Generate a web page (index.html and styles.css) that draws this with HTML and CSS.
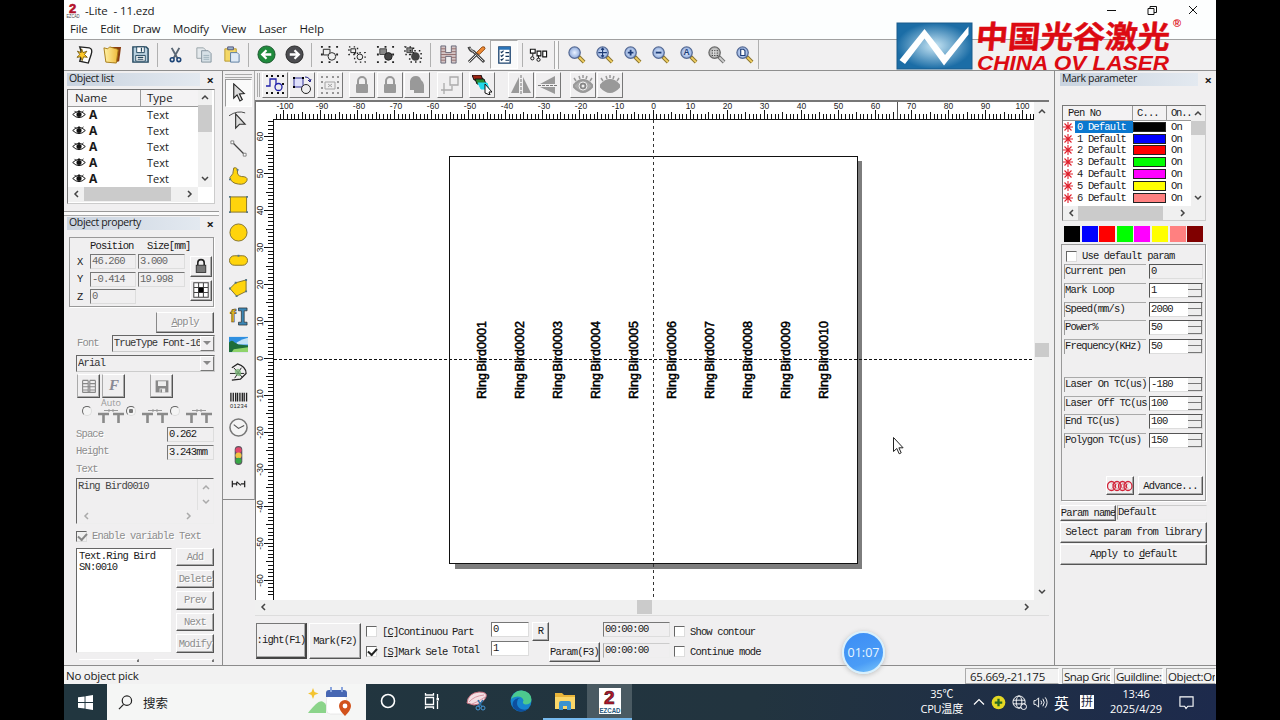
FILE: index.html
```html
<!DOCTYPE html>
<html lang="en">
<head>
    <meta charset="utf-8">
    <title>-Lite - 11.ezd</title>
    <link rel="stylesheet" href="styles.css">
</head>
<body>
<!-- Shared symbols -->
<svg class="defs">
    <defs>
        <radialGradient id="lens"><stop offset="0" stop-color="#e8f1ff"/><stop offset="1" stop-color="#8fabdc"/></radialGradient>
        <radialGradient id="logoBg"><stop offset="0" stop-color="#c8e6f5"/><stop offset="1" stop-color="#1b6da6"/></radialGradient>
        <linearGradient id="paper"><stop offset="0" stop-color="#fff3a8"/><stop offset="1" stop-color="#f0b93a"/></linearGradient>
    </defs>
    <symbol id="mag" viewBox="0 0 20 20">
        <path d="M12 12l6 6" stroke="#8a7430" stroke-width="4"/>
        <path d="M13 13l5 5" stroke="#f1cf62" stroke-width="2"/>
        <circle cx="8" cy="8" r="6" fill="url(#lens)" stroke="#566a94" stroke-width="1.3"/>
    </symbol>
    <symbol id="dots" viewBox="0 0 20 20">
        <g fill="#111"><path d="M1 1h2v2H1zM6 1h2v2H6zM12 1h2v2h-2zM17 1h2v2h-2zM1 6h2v2H1zM17 6h2v2h-2zM1 12h2v2H1zM17 12h2v2h-2zM1 17h2v2H1zM6 17h2v2H6zM12 17h2v2h-2zM17 17h2v2h-2z"/></g>
    </symbol>
    <symbol id="eye" viewBox="0 0 14 10">
        <path d="M0 5q7-7 14 0q-7 7-14 0z" fill="#fff" stroke="#111" stroke-width="1.1"/><circle cx="7" cy="5" r="2.800" fill="#111"/><path d="M2 1l2 2M7 0v2M12 1l-2 2" stroke="#111"/>
    </symbol>
    <symbol id="star" viewBox="0 0 10 10">
        <path d="M0 5h10M5 0v10M1.5 1.5l7 7M8.5 1.5l-7 7" stroke="#e0202c" stroke-width="1.1"/>
    </symbol>
    <symbol id="lock" viewBox="0 0 20 20">
        <path d="M6 9V6a4 4 0 0 1 8 0v3" fill="none" stroke="#999" stroke-width="2"/><rect x="4" y="9" width="12" height="9" rx="1" fill="#999"/>
    </symbol>
    <symbol id="up" viewBox="0 0 8 8"><path d="M1 6l3-3 3 3" fill="none" stroke="currentColor" stroke-width="1.5"/></symbol>
    <symbol id="down" viewBox="0 0 8 8"><path d="M1 2l3 3 3-3" fill="none" stroke="currentColor" stroke-width="1.5"/></symbol>
    <symbol id="left" viewBox="0 0 8 8"><path d="M6 1L3 4l3 3" fill="none" stroke="currentColor" stroke-width="1.5"/></symbol>
    <symbol id="right" viewBox="0 0 8 8"><path d="M2 1l3 3-3 3" fill="none" stroke="currentColor" stroke-width="1.5"/></symbol>
    <symbol id="tt" viewBox="0 0 26 14"><path d="M0 5h11M15 5h11M5.500 5v9M20.500 5v9" stroke="#8a8a8a" stroke-width="2.600"/><path d="M6 1.500h14M11 0v3M15 0v3" stroke="#999"/></symbol>
</svg>

<div class="window">
    <header class="titlebar">
        <svg class="app-icon" viewBox="0 0 14 16"><text x="3" y="11" font-size="13" font-weight="bold" fill="#b3122b" stroke="#b3122b" stroke-width=".6">2</text><text x="0.500" y="15.500" font-size="4.500" textLength="13" lengthAdjust="spacingAndGlyphs" fill="#444">EZCAD</text></svg>
        <span class="title">-Lite &nbsp;- 11.ezd</span>
        <div class="win-buttons">
            <svg viewBox="0 0 10 10"><path d="M1 5.500h9" stroke="#111"/></svg>
            <svg viewBox="0 0 10 10"><path d="M1 3.500h6v6H1zM3 3V1.500h6.500v6H7" fill="none" stroke="#111"/></svg>
            <svg viewBox="0 0 10 10"><path d="M1 1l8 8M9 1l-8 8" stroke="#111"/></svg>
        </div>
    </header>
    <nav class="menu">
        <span>File</span><span>Edit</span><span>Draw</span><span>Modify</span><span>View</span><span>Laser</span><span>Help</span>
    </nav>

    <div class="toolbar">
        <span class="tb"><svg viewBox="0 0 20 20"><path d="M5 2l10 1q4 1 2 7l-3 9-9-2q3-8 0-15z" fill="#fff" stroke="#222" stroke-width="1.400"/><path d="M7 4l1.500 4 4-1.500-2.500 3.500 3 3-4-.5-1.500 4-1.500-4-4 .5 3-3-2.500-3.500 4 1.500z" fill="#ffc928" stroke="#604800" stroke-width=".8"/></svg></span>
        <span class="tb"><svg viewBox="0 0 20 20"><path d="M9 2h10l-2 15-6 2z" fill="#8a3d10"/><path d="M1 3l4 1 2-2 7 2 2 1-2 14-11-1z" fill="url(#paper)" stroke="#a67b18"/></svg></span>
        <span class="tb"><svg viewBox="0 0 20 20"><path d="M2 2h14l2 2v14H2z" fill="#b9d1e0" stroke="#24485f" stroke-width="1.500"/><path d="M6 2h8v6H6zM5 11h10v6H5z" fill="#fff" stroke="#24485f"/><path d="M11 3v4M7 13h6M7 15h6" stroke="#24485f" stroke-width="1.300"/></svg></span>
        <i class="sep"></i>
        <span class="tb"><svg viewBox="0 0 20 20"><path d="M6 3l6 11M14 3L8 14" stroke="#5a6775" stroke-width="2"/><circle cx="6.500" cy="15.500" r="2" fill="none" stroke="#1b4376" stroke-width="1.600"/><circle cx="13.500" cy="15.500" r="2" fill="none" stroke="#1b4376" stroke-width="1.600"/></svg></span>
        <span class="tb"><svg viewBox="0 0 20 20"><path d="M3 3h7l2 2v9H3z" fill="#e4e9ec" stroke="#98a2a8"/><path d="M8 6h7l3 3v9H8z" fill="#d6e0e6" stroke="#8595a0"/><path d="M10 11h6M10 13h6M10 15h6" stroke="#9fb2bd"/></svg></span>
        <span class="tb"><svg viewBox="0 0 20 20"><path d="M3 4h12v13H3z" fill="#f4d867" stroke="#b79a33"/><path d="M6 2h6v3H6z" fill="#9bb6d0" stroke="#557"/><path d="M9 8h7l2 2v8H9z" fill="#dfeaf6" stroke="#5a7ba0"/></svg></span>
        <i class="sep"></i>
        <span class="tb"><svg viewBox="0 0 20 20"><circle cx="10" cy="10" r="9" fill="#1f8a3c" stroke="#17542a"/><path d="M15 10H6M10 5.500L5.500 10l4.500 4.500" fill="none" stroke="#fff" stroke-width="2.400"/></svg></span>
        <span class="tb"><svg viewBox="0 0 20 20"><circle cx="10" cy="10" r="9" fill="#4c4c50" stroke="#222"/><path d="M5 10h9M10 5.500l4.500 4.500-4.500 4.500" fill="none" stroke="#fff" stroke-width="2.400"/></svg></span>
        <i class="sep"></i>
        <span class="tb"><svg viewBox="0 0 20 20"><path d="M1 1h2v2H1zM9 1h2v2H9zM17 1h2v2h-2zM1 9h2v2H1zM17 9h2v2h-2zM1 17h2v2H1zM9 17h2v2H9zM17 17h2v2h-2z" fill="#222"/><path d="M3.500 4.500h7v6h-7z" fill="#eee" stroke="#222"/><circle cx="12.500" cy="12" r="4" fill="#eee" stroke="#222"/></svg></span>
        <span class="tb"><svg viewBox="0 0 20 20"><path d="M3 4h5v4H3z" fill="#eee" stroke="#222"/><circle cx="12.500" cy="12.500" r="3" fill="#eee" stroke="#222"/><path d="M1 2h9v8H1zM7 8h11v10H7z" fill="none" stroke="#222" stroke-width="1.500" stroke-dasharray="1.500 3.500"/></svg></span>
        <span class="tb"><svg viewBox="0 0 20 20"><path d="M1 1h2v2H1zM9 1h2v2H9zM17 1h2v2h-2zM1 9h2v2H1zM17 9h2v2h-2zM1 17h2v2H1zM9 17h2v2H9zM17 17h2v2h-2z" fill="#222"/><path d="M4 4h7v6H4z" fill="#888" stroke="#444"/><circle cx="13" cy="12" r="4" fill="#444" stroke="#222"/></svg></span>
        <span class="tb"><svg viewBox="0 0 20 20"><path d="M3 3h6v5H3z" fill="#888" stroke="#444"/><circle cx="12" cy="12" r="4.500" fill="#444"/><path d="M1 2h9v8H1zM6 6h12v12H6z" fill="none" stroke="#222" stroke-width="1.600" stroke-dasharray="1.600 3.200"/></svg></span>
        <i class="sep"></i>
        <span class="tb"><svg viewBox="0 0 20 20"><path d="M2 1h5v7h6V1h5v18h-5v-7H7v7H2z" fill="#d5c5c5" stroke="#667"/><path d="M2 4h5M2 7h5M2 10h16M2 13h5M2 16h5M13 4h5M13 7h5M13 13h5M13 16h5" stroke="#946f6f"/></svg></span>
        <span class="tb"><svg viewBox="0 0 20 20"><path d="M2 2q1 4 5 5l11 11" stroke="#444" stroke-width="3" fill="none"/><path d="M3 3q1 3 4 4l10 10" stroke="#ddd" fill="none"/><path d="M2 18l9-9" stroke="#444" stroke-width="3"/><path d="M2 18l8-8" stroke="#eee"/><path d="M10 8l6-6q3-1 3 2l-6 6z" fill="#ee8a34" stroke="#8f4a12"/></svg></span>
        <span class="tb pressed"><svg viewBox="0 0 20 20"><path d="M4 2h12v17H4z" fill="#fff" stroke="#1c4470" stroke-width="1.400"/><path d="M4 2h12v3H4z" fill="#2a73b8"/><path d="M6 7l1 1 2-2M6 11l1 1 2-2M6 15l1 1 2-2M11 8h4M11 12h4M11 16h4" fill="none" stroke="#15365c" stroke-width="1.200"/></svg></span>
        <i class="sep short"></i>
        <span class="tb"><svg viewBox="0 0 20 20"><path d="M1.500 4.500h5v4h-5zM8.500 6.500h4v5h-4zM14.500 6.500h4v6h-4z" fill="#fff" stroke="#111" stroke-width="1.200"/><circle cx="3.500" cy="14" r="1.700" fill="none" stroke="#111"/><circle cx="10" cy="15.500" r="1.700" fill="none" stroke="#111"/><path d="M4 9v3M10 11v3" stroke="#111"/></svg></span>
        <i class="sep wide"></i>
        <span class="tb"><svg viewBox="0 0 20 20"><use href="#mag"/></svg></span>
        <span class="tb"><svg viewBox="0 0 20 20"><use href="#mag"/><path d="M8 3.500v9M3.500 8h9M6.500 5L8 3.500 9.500 5M6.500 11L8 12.500 9.500 11" stroke="#1d3c78" stroke-width="1.200" fill="none"/></svg></span>
        <span class="tb"><svg viewBox="0 0 20 20"><use href="#mag"/><path d="M8 5v6M5 8h6" stroke="#1d3c78" stroke-width="2"/></svg></span>
        <span class="tb"><svg viewBox="0 0 20 20"><use href="#mag"/><path d="M5 8h6" stroke="#1d3c78" stroke-width="2"/></svg></span>
        <span class="tb"><svg viewBox="0 0 20 20"><use href="#mag"/><text x="4.800" y="11" font-size="9" font-weight="bold" fill="#1d3c78">A</text></svg></span>
        <span class="tb"><svg class="gray" viewBox="0 0 20 20"><use href="#mag"/><path d="M5 6h7M5 8.500h7M5 11h7" stroke="#222" stroke-dasharray="1.200 1.400"/></svg></span>
        <span class="tb"><svg viewBox="0 0 20 20"><use href="#mag"/><path d="M6 4.500h3l1.500 1.500v5H6z" fill="#fff" stroke="#1d3c78" stroke-width="1.200"/></svg></span>
        <i class="sep end"></i>
    </div>

    <main class="main">
        <!-- Left dock -->
        <aside class="left">
            <div class="dock-title"><span>Object list</span><b>×</b></div>
            <div class="obj-list">
                <div class="obj-cols">
                    <div class="obj-head"><span>Name</span><span>Type</span></div>
                    <div class="obj-row"><svg><use href="#eye"/></svg><b>A</b><span>Text</span></div>
                    <div class="obj-row"><svg><use href="#eye"/></svg><b>A</b><span>Text</span></div>
                    <div class="obj-row"><svg><use href="#eye"/></svg><b>A</b><span>Text</span></div>
                    <div class="obj-row"><svg><use href="#eye"/></svg><b>A</b><span>Text</span></div>
                    <div class="obj-row"><svg><use href="#eye"/></svg><b>A</b><span>Text</span></div>
                </div>
                <div class="vscroll"><svg><use href="#up"/></svg><i></i><svg><use href="#down"/></svg></div>
                <div class="hscroll"><svg><use href="#left"/></svg><i></i><svg><use href="#right"/></svg></div>
            </div>
            <div class="splitter"></div>
            <div class="dock-title"><span>Object property</span><b>×</b></div>
            <div class="property">
                <div class="pos-box">
                    <div class="pos-grid">
                        <span></span><span class="pos-h">Position</span><span class="pos-h size">Size[mm]</span>
                        <span>X</span><span class="field dim">46.260</span><span class="field dim">3.000</span>
                        <span>Y</span><span class="field dim">-0.414</span><span class="field dim">19.998</span>
                        <span>Z</span><span class="field dim">0</span>
                    </div>
                    <div class="pos-buttons">
                        <span class="btn"><svg viewBox="0 0 20 20"><path d="M6 9V6a4 4 0 0 1 8 0v3" fill="none" stroke="#222" stroke-width="2"/><rect x="4" y="9" width="12" height="9" fill="#777" stroke="#222"/></svg></span>
                        <span class="btn"><svg viewBox="0 0 20 20"><path d="M1 1h18v18H1zM7 1v18M13 1v18M1 7h18M1 13h18" fill="#fff" stroke="#444" stroke-width="1.300"/><path d="M7 7h6v6H7z"/></svg></span>
                    </div>
                </div>
                <span class="btn apply dis"><u>A</u>pply</span>
                <div class="font-row"><span class="dis">Font</span><span class="select"><em>TrueType Font-16</em><i></i></span></div>
                <span class="select arial"><em>Arial</em><i></i></span>
                <div class="font-buttons">
                    <span class="btn"><svg viewBox="0 0 20 20"><path d="M2 3h7M11 3h7M2 7h7M11 7h7M2 11h16M2 15h7M11 15h7M2 18h16M2 3v15M9 3v15M11 3v15M18 3v15" stroke="#888" stroke-width="1.400"/></svg></span>
                    <span class="btn f">F</span>
                    <span class="btn save"><svg viewBox="0 0 20 20"><path d="M2 3h16v15H2z" fill="#888"/><path d="M5 4h10v6H5zM7 13h7v5H7z" fill="#eee"/><path d="M8 14h2v4H8z" fill="#888"/></svg></span>
                </div>
                <div class="radios">
                    <i class="radio"></i><span><small>Auto</small><svg><use href="#tt"/></svg></span>
                    <i class="radio on"></i><span><svg><use href="#tt"/></svg></span>
                    <i class="radio"></i><span><svg><use href="#tt"/></svg></span>
                </div>
                <div class="metric"><span class="dis">Space</span><span class="field">0.262</span></div>
                <div class="metric h"><span class="dis">Height</span><span class="field">3.243mm</span></div>
                <div class="dis text-label">Text</div>
                <div class="textarea"><span>Ring Bird0010</span>
                    <div class="ta-v"><svg><use href="#up"/></svg><svg><use href="#down"/></svg></div>
                    <div class="ta-h"><svg><use href="#left"/></svg><svg><use href="#right"/></svg></div>
                </div>
                <div class="enable dis"><i class="check on"></i>Enable variable Text</div>
                <div class="var">
                    <div class="var-list">Text.Ring Bird<br>SN:0010</div>
                    <div class="var-buttons">
                        <span class="btn dis">Add</span><span class="btn dis">Delete</span><span class="btn dis">Prev</span><span class="btn dis">Next</span><span class="btn dis">Modify</span>
                    </div>
                </div>
                <div class="cut-row"><i></i><i></i></div>
            </div>
        </aside>

        <!-- Draw tools -->
        <div class="tools">
            <i class="grip"></i>
            <span class="tool pressed"><svg viewBox="0 0 20 20"><path d="M5 1l11 10-5 .5 3 6-2.500 1.500-3-6.500L5 16z" fill="#ddd" stroke="#222" stroke-width="1.200"/></svg></span>
            <span class="tool"><svg viewBox="0 0 20 20"><path d="M0 5q9-6 17-3" fill="none" stroke="#444"/><path d="M7 3l10 11H11l-4 4z" fill="#ddd" stroke="#333" stroke-width="1.200"/></svg></span>
            <span class="tool"><svg viewBox="0 0 20 20"><path d="M4 4l12 12" stroke="#444" stroke-width="1.300"/><path d="M2 2h3v3H2zM15 15h3v3h-3z" fill="#fff" stroke="#666" stroke-width=".8"/></svg></span>
            <span class="tool"><svg viewBox="0 0 20 20"><path d="M5 1q4-1 4 3-1 5 4 6 7 0 6 4-2 5-9 4Q2 17 1 11q4-3 4-10z" fill="#ffd40c" stroke="#83712a"/><path d="M8 2h2v2H8zM0 12h2v2H0z" fill="#578"/></svg></span>
            <span class="tool"><svg viewBox="0 0 20 20"><path d="M1.500 2h17v16h-17z" fill="#ffd40c" stroke="#83712a"/><path d="M0 1h2v2H0zM18 1h2v2h-2zM0 17h2v2H0zM18 17h2v2h-2z" fill="#578"/></svg></span>
            <span class="tool"><svg viewBox="0 0 20 20"><circle cx="10" cy="10" r="9" fill="#ffd40c" stroke="#83712a"/></svg></span>
            <span class="tool"><svg viewBox="0 0 20 20"><rect x="0.500" y="5" width="19" height="10" rx="5" fill="#ffd40c" stroke="#83712a"/><path d="M9 4h2v2H9z" fill="#578"/></svg></span>
            <span class="tool"><svg viewBox="0 0 20 20"><path d="M1 10l6-6 11-3v12l-10 5z" fill="#ffd40c" stroke="#83712a"/><path d="M0 9h2v2H0zM6 3h2v2H6zM17 0h2v2h-2zM17 12h2v2h-2zM7 17h2v2H7z" fill="#578"/></svg></span>
            <span class="tool"><svg viewBox="0 0 20 20"><text x="1" y="16" font-size="19" font-weight="bold" fill="#e3b51d" stroke="#333" stroke-width=".6">f</text><path d="M10 1h9v3h-3v12h3v3h-9v-3h3V4h-3z" fill="#3b86b5" stroke="#222" stroke-width=".7"/></svg></span>
            <span class="tool"><svg viewBox="0 0 20 20"><path d="M0 2h20v16H0z" fill="#2f8fe0"/><path d="M8 8q6-4 12-5v7H8z" fill="#c4e2f6"/><path d="M0 8q3-4 6 0l4 2 10 1v7H0z" fill="#1d6d39"/><path d="M5 15l15-2v5H3z" fill="#8fd36a"/></svg></span>
            <span class="tool"><svg viewBox="0 0 20 20"><path d="M3 5l6-4q9 3 9 10l-6 6-9 1" fill="none" stroke="#222" stroke-width="1.300"/><path d="M1 11h15M5 5l9 10M13 5L6 16" stroke="#222"/><path d="M6 8q4-4 6 0t-1 6q-5 0-5-6z" fill="#79b578" opacity=".8"/></svg></span>
            <span class="tool"><svg viewBox="0 0 20 20"><path d="M2 3v9M4.500 3v9M7 3v9M9 3v9M11.500 3v9M14 3v9M16 3v9M18.500 3v9" stroke="#222" stroke-width="1.400"/><text x="1" y="18.500" font-size="6" textLength="18" fill="#222">01234</text></svg></span>
            <span class="tool"><svg viewBox="0 0 20 20"><circle cx="10" cy="10" r="9" fill="#f4f4f4" stroke="#777" stroke-width="1.600"/><path d="M5 7l5 4 6-3" fill="none" stroke="#555" stroke-width="1.200"/></svg></span>
            <span class="tool"><svg viewBox="0 0 20 20"><rect x="6" y="0" width="8" height="20" rx="4" fill="#5d5560"/><circle cx="10" cy="4.500" r="3.200" fill="#e2486c"/><circle cx="10" cy="10" r="3.200" fill="#efc443"/><circle cx="10" cy="15.500" r="3.200" fill="#38a746"/></svg></span>
            <span class="tool"><svg viewBox="0 0 20 20"><path d="M3.500 7v7M3.500 10.500h4M16.500 7v7M12.500 10.500h4M8 8l4.500 4M8 9v3" stroke="#222" stroke-width="1.300"/></svg></span>
        </div>

        <!-- Work area -->
        <section class="center">
            <div class="toolbar2">
                <i class="grip-v"></i>
                <span class="btn2"><svg viewBox="0 0 20 20"><path d="M1 0h2v2H1zM6 0h2v2H6zM12 0h2v2h-2zM17 0h2v2h-2zM1 17h2v2H1zM6 17h2v2H6zM12 17h2v2h-2zM17 17h2v2h-2zM17 8h2v2h-2z" fill="#111"/><path d="M1 11h4V4h6v6" fill="none" stroke="#22a" stroke-width="1.300"/><circle cx="13.500" cy="12" r="3.500" fill="#eee" stroke="#22a" stroke-width="1.300"/></svg></span>
                <span class="btn2"><svg viewBox="0 0 20 20"><path d="M2 3h9v9H2z" fill="#dfe0fa" stroke="#339"/><circle cx="14" cy="14" r="4.500" fill="#eee" stroke="#222"/><path d="M1 2h2v2H1zM10 2h2v2h-2zM1 11h2v2H1z"/><path d="M13 2q5 0 5 5M16 5l2 2 1-3" fill="none" stroke="#228"/></svg></span>
                <span class="btn2 fade"><svg viewBox="0 0 20 20"><use href="#dots"/><path d="M5 7h10v7H5z" fill="none" stroke="#333"/><path d="M8 9l4 3M12 9l-4 3" stroke="#333"/></svg></span>
                <span class="btn2 g6"><svg><use href="#lock"/></svg></span>
                <span class="btn2"><svg><use href="#lock"/></svg></span>
                <span class="btn2"><svg viewBox="0 0 20 20"><path d="M3 10V6q1-5 6-5 4 0 5 4 3 2 3 5v8H7v-3H3z" fill="#999"/></svg></span>
                <span class="btn2 g6"><svg viewBox="0 0 20 20"><path d="M10 2h8v8h-8zM4 8v11M1 15h11v-4" fill="none" stroke="#aaa" stroke-width="1.300"/></svg></span>
                <span class="btn2 g6"><svg viewBox="0 0 20 20"><path d="M0 0h9l2 5H2z" fill="#9b2412" stroke="#111"/><path d="M3 4h9l2 5H5z" fill="#278a32" stroke="#111"/><path d="M6 8h9l2 6H9z" fill="#20d8ea" stroke="#20d8ea"/><path d="M13 9l7 8-3 0 1 3-5-2z" fill="#fff" stroke="#111"/></svg></span>
                <span class="btn2 g12"><svg viewBox="0 0 20 20"><path d="M8 2v16H0zM12 2v16h8z" fill="#999"/><path d="M10 0v20" stroke="#777" stroke-dasharray="3 1"/></svg></span>
                <span class="btn2"><svg viewBox="0 0 20 20"><path d="M17 1v8H2zM17 19v-7H2z" fill="#999"/><path d="M0 10.500h20" stroke="#777" stroke-dasharray="3 1"/></svg></span>
                <span class="btn2 g8"><svg viewBox="0 0 20 20"><path d="M0 11q10-12 20 0-10 12-20 0z" fill="#aaa" stroke="#999" stroke-width="2"/><path d="M1 3l2 3M6 1l1 3M10 0v3M14 1l-1 3M19 3l-2 3" stroke="#999" stroke-width="1.500"/><circle cx="10" cy="11" r="4" fill="#888" stroke="#eee"/><circle cx="10" cy="11" r="1.500" fill="#eee"/></svg></span>
                <span class="btn2"><svg viewBox="0 0 20 20"><path d="M0 11q10-12 20 0-10 12-20 0z" fill="#999" stroke="#999" stroke-width="2"/><path d="M1 3l2 3M6 1l1 3M10 0v3M14 1l-1 3M19 3l-2 3" stroke="#999" stroke-width="1.500"/></svg></span>
            </div>
            <div class="canvas-row">
                <svg id="canvas" class="canvas" viewBox="256 102 778 498">
                    <rect x="256" y="102" width="778" height="498" fill="#fff"/>
                    <g id="rulers"></g>
                    <rect x="455" y="563" width="407" height="6" fill="#7d7d7d"/>
                    <rect x="857" y="161" width="5" height="408" fill="#7d7d7d"/>
                    <rect x="449.500" y="156.500" width="408" height="407" fill="#fff" stroke="#111"/>
                    <path d="M274 359.500H1034" stroke="#111" stroke-dasharray="3 2"/>
                    <path d="M653.500 120V600" stroke="#333" stroke-dasharray="3 3"/>
                    <path d="M897.500 102v17" stroke="#555"/>
                    <g id="rings" class="rings"></g>
                    <path d="M893.500 437.500v14l3.300-3 2.400 5.300 2-1-2.300-5h4.200z" fill="#fff" stroke="#222"/>
                </svg>
                <div class="vscroll big"><svg><use href="#up"/></svg><i></i><svg><use href="#down"/></svg></div>
            </div>
            <div class="hscroll big"><svg><use href="#left"/></svg><i></i><svg><use href="#right"/></svg></div>
            <div class="mark-bar">
                <span class="btn light">:ight(F1)</span>
                <span class="btn mark">Mark(F2)</span>
                <div class="col c-mode"><label><i class="check"></i>[<u>C</u>]Continuou</label><label><i class="check on"></i>[<u>S</u>]Mark Sele</label></div>
                <div class="col c-part"><span>Part</span><span>Total</span></div>
                <div class="col c-num"><span class="field white">0</span><span class="field white">1</span></div>
                <span class="btn r">R</span>
                <span class="btn param">Param(F3)</span>
                <div class="col c-time"><span class="field">00:00:00</span><span class="field flat">00:00:00</span></div>
                <div class="col c-opt"><label><i class="check"></i>Show contour</label><label><i class="check"></i>Continue mode</label></div>
            </div>
        </section>

        <!-- Mark parameter dock -->
        <aside class="right">
            <div class="dock-title"><span>Mark parameter</span><b>×</b></div>
            <div class="pens">
                <div class="pen-cols">
                    <div class="pen-head"><span>Pen No</span><span>C...</span><span>On..</span></div>
                    <div class="pen sel"><svg><use href="#star"/></svg><span>0 Default</span><i class="k0"></i><em>On</em></div>
                    <div class="pen"><svg><use href="#star"/></svg><span>1 Default</span><i class="k1"></i><em>On</em></div>
                    <div class="pen"><svg><use href="#star"/></svg><span>2 Default</span><i class="k2"></i><em>On</em></div>
                    <div class="pen"><svg><use href="#star"/></svg><span>3 Default</span><i class="k3"></i><em>On</em></div>
                    <div class="pen"><svg><use href="#star"/></svg><span>4 Default</span><i class="k4"></i><em>On</em></div>
                    <div class="pen"><svg><use href="#star"/></svg><span>5 Default</span><i class="k5"></i><em>On</em></div>
                    <div class="pen"><svg><use href="#star"/></svg><span>6 Default</span><i class="k6"></i><em>On</em></div>
                </div>
                <div class="vscroll"><svg><use href="#up"/></svg><i></i><svg><use href="#down"/></svg></div>
                <div class="hscroll"><svg><use href="#left"/></svg><i></i><svg><use href="#right"/></svg></div>
            </div>
            <div class="swatches"><i class="k0"></i><i class="k1"></i><i class="k2"></i><i class="k3"></i><i class="k4"></i><i class="k5"></i><i class="k6"></i><i class="k7"></i></div>
            <div class="param-box">
                <label class="use-def"><i class="check"></i>Use default param</label>
                <div class="prow"><span>Current pen</span><b class="ro">0</b></div>
                <div class="prow"><span>Mark Loop</span><b>1<i></i></b></div>
                <div class="prow"><span>Speed(mm/s)</span><b>2000<i></i></b></div>
                <div class="prow"><span>Power%</span><b>50<i></i></b></div>
                <div class="prow"><span>Frequency(KHz)</span><b>50<i></i></b></div>
                <div class="prow tc"><span>Laser On TC(us)</span><b>-180<i></i></b></div>
                <div class="prow"><span>Laser Off TC(us</span><b>100<i></i></b></div>
                <div class="prow"><span>End TC(us)</span><b>100<i></i></b></div>
                <div class="prow"><span>Polygon TC(us)</span><b>150<i></i></b></div>
                <div class="adv">
                    <span class="btn wave"><svg viewBox="0 0 26 12"><g fill="none" stroke="#d22338" stroke-width="1.300"><ellipse cx="4.500" cy="6" rx="4" ry="4.500"/><ellipse cx="10" cy="6" rx="4" ry="4.500"/><ellipse cx="15.500" cy="6" rx="4" ry="4.500"/><ellipse cx="21" cy="6" rx="4" ry="4.500"/><path d="M5 3.500l5 5M10 3.500l-5 5M11 3.500l5 5M16 3.500l-5 5M16 3.500l5 5M21 3.500l-5 5" stroke-width=".7"/></g></svg></span>
                    <span class="btn">Advance...</span>
                </div>
            </div>
            <div class="pname"><span class="btn">Param name</span><span class="field flat">Default</span></div>
            <span class="btn wide-btn">Select param from library</span>
            <span class="btn wide-btn">Apply to&nbsp;<u>d</u>efault</span>
        </aside>
    </main>

    <footer class="status">
        <span class="msg">No object pick</span>
        <span class="cell c1">65.669,-21.175</span><span class="cell c2">Snap Grid</span><span class="cell c2">Guildline:</span><span class="cell c3">Object:On</span>
    </footer>

    <div class="taskbar">
        <div class="start"><svg viewBox="0 0 16 16"><path d="M0 2.500l7-1v6H0zM8 1.300L16 0v7.500H8zM0 8.500h7v6l-7-1zM8 8.500h8V16l-8-1.300z" fill="#fff"/></svg></div>
        <div class="search">
            <svg class="s-ic" viewBox="0 0 16 16"><circle cx="9.500" cy="6" r="5" fill="none" stroke="#222" stroke-width="1.300"/><path d="M6 10l-5 5" stroke="#222" stroke-width="1.300"/></svg>
            <span>搜索</span>
            <svg class="s-art" viewBox="0 0 44 30"><path d="M0 26q2-3 8-9 6-6 10 1v8z" fill="#8bd48a"/><path d="M5 1l1.500 4 4 1.500-4 1.500L5 12 3.500 8 0 6.500 3.500 5z" fill="#f4c430"/><rect x="18.500" y="8" width="20" height="19" rx="4" fill="#fff" stroke="#ddd" stroke-width=".6"/><path d="M18 10V6q0-3 3-3h15q3 0 3 3v4z" fill="#4767b3"/><path d="M23 0v5M34 0v5" stroke="#89a4dd" stroke-width="2"/><path d="M37 13a6 6 0 0 1 6 6q0 4-6 10-6-6-6-10a6 6 0 0 1 6-6z" fill="#d2521b"/><circle cx="37" cy="19" r="2.400" fill="#fff"/></svg>
        </div>
        <div class="apps">
            <span><svg viewBox="0 0 22 22"><circle cx="11" cy="11" r="6.500" fill="none" stroke="#fff" stroke-width="1.600"/></svg></span>
            <span><svg viewBox="0 0 22 22"><path d="M4.500 7.500h8v7h-8zM4.500 3v2h8V3M4.500 19v-2h8v2M16.500 4v4M16.500 11v8" fill="none" stroke="#fff" stroke-width="1.300"/><path d="M15.500 8h2.500v2.500h-2.500z" fill="#fff"/></svg></span>
            <span><svg viewBox="0 0 22 22"><path d="M1 13Q2 3 13 2q9 0 7 5-3 7-12 8z" fill="#f3dfe4" stroke="#c56f7e"/><path d="M3 12q5-6 15-7M6 14q6-2 13-7" stroke="#d897a3" fill="none"/><path d="M12 10l4 7M17 10l-5 7" stroke="#2c72a8" stroke-width="1.500"/><circle cx="12" cy="18" r="2" fill="none" stroke="#4797d6"/><circle cx="17" cy="18" r="2" fill="none" stroke="#4797d6"/></svg></span>
            <span><svg viewBox="0 0 22 22"><circle cx="11" cy="11" r="10.500" fill="#1684cf"/><path d="M1 9Q4 0 12 .5q9 1 9.500 9-.5 5-6 5-4-1-2-4-1-4-6-4-4 0-6.500 2.500z" fill="#4cc98e"/><path d="M8 9q-3 7 3 10 5 2 8-1-5 5-11 3Q1 18 3 12q2-4 7-4z" fill="#0d4f9e"/></svg></span>
            <span class="open"><svg viewBox="0 0 22 22"><path d="M1 3h7l2 2h11v14H1z" fill="#e9b53a"/><path d="M1 7h20v12H1z" fill="#fbd768"/><path d="M5 20v-7q0-2 2-2h8q2 0 2 2v7h-4v-4H9v4z" fill="#3b93cf"/></svg></span>
            <span class="open active"><svg viewBox="0 0 22 26"><path d="M0 0h22v26H0z" fill="#fff"/><text x="5" y="16" font-size="19" font-weight="bold" fill="#b5182c" stroke="#4b1420" stroke-width=".7">2</text><text x="0.500" y="24.500" font-size="8" font-weight="bold" textLength="21" lengthAdjust="spacingAndGlyphs" fill="#24587e">EZCAD</text></svg></span>
        </div>
        <div class="tray">
            <div class="two temp"><span>35℃</span><span>CPU温度</span></div>
            <svg class="t-up" viewBox="0 0 12 12"><path d="M1 8.500l5-5 5 5" fill="none" stroke="#fff" stroke-width="1.200"/></svg>
            <svg viewBox="0 0 16 16"><circle cx="8" cy="8" r="7.300" fill="#e5d824"/><path d="M8 4v8M4 8h8" stroke="#26691f" stroke-width="2.400"/></svg>
            <svg viewBox="0 0 16 16"><g fill="none" stroke="#fff"><circle cx="7.500" cy="7.500" r="6.500"/><ellipse cx="7.500" cy="7.500" rx="3" ry="6.500"/><path d="M1 5.500h13M1 9.500h13"/></g><circle cx="12.500" cy="12.500" r="3" fill="#22304a" stroke="#fff"/></svg>
            <svg viewBox="0 0 16 16"><g fill="none" stroke="#fff"><path d="M1 6h2l3-3v10l-3-3H1zM8.500 6q1.500 2 0 4M10.500 4q3 4 0 8M13 2.500q4 5.500 0 11"/></g></svg>
            <span class="ying">英</span>
            <span class="pin">拼</span>
            <div class="two clock"><span>13:46</span><span>2025/4/29</span></div>
            <svg class="note" viewBox="0 0 16 16"><path d="M1 2h14v10H9.500L7.500 14.500 6 12H1z" fill="none" stroke="#fff" stroke-width="1.200"/></svg>
        </div>
    </div>

    <svg class="logo" viewBox="0 0 290 56">
        <rect x="1" y="5" width="75" height="46" fill="url(#logoBg)" stroke="#1b5c8c"/>
        <path d="M3.500 42L28.500 11 49 37 72.500 8.500v8L48 47.500 28.500 20.500 9 46z" fill="#fff"/>
        <g fill="#dc0a12">
            <text class="cn" transform="translate(79 30) skewX(-5)" x="0" y="0" textLength="194" lengthAdjust="spacingAndGlyphs">中国光谷激光</text>
            <text class="en" x="81" y="51.500" textLength="192" lengthAdjust="spacingAndGlyphs">CHINA OV LASER</text>
            <text x="277" y="9" font-size="11" font-weight="bold">®</text>
        </g>
    </svg>
    <div class="timer">01:07</div>
</div>
<script src="rulers.js"></script>
</body>
</html>
```
FILE: styles.css
```css
* { box-sizing: border-box; }
body {
    margin: 0;
    background: #000;
    overflow: hidden;
    font-family: "Open Sans", "Noto Sans CJK SC", sans-serif;
    font-size: 11px;
    color: #1a1a1a;
}
i, em { font-style: normal; }
svg { display: block; flex: none; font-family: "Liberation Sans", sans-serif; }
.defs { position: absolute; width: 0; height: 0; }
.window {
    position: relative;
    width: 1152px;
    height: 720px;
    margin: 0 auto;
    background: #f0eff0;
    display: flex;
    flex-direction: column;
    overflow: hidden;
}

/* title + menu */
.titlebar {
    height: 20px;
    background: #fdfefe;
    display: flex;
    align-items: center;
    padding-left: 2px;
}
.app-icon { width: 14px; height: 16px; }
.title { margin: 1px 0 0 5px; font-size: 11.5px; letter-spacing: -.1px; white-space: pre; }
.win-buttons { margin-left: auto; display: flex; gap: 31px; padding-right: 18px; }
.win-buttons svg { width: 10px; height: 10px; }
.menu {
    height: 19px;
    background: #fcfefe;
    display: flex;
    align-items: center;
    gap: 12.600px;
    padding: 0 0 2px 6px;
    font-size: 11.5px;
    letter-spacing: -.15px;
}

/* main toolbar */
.toolbar {
    height: 32px;
    border-top: 1px solid #a0a0a0;
    border-bottom: 1px solid #8f8f8f;
    background: #f1f0f1;
    display: flex;
    align-items: center;
    padding-left: 6px;
}
.tb { width: 28px; height: 29px; display: flex; align-items: center; justify-content: center; }
.tb svg { width: 19px; height: 19px; }
.tb.pressed { background: #fafafa; border: 1px solid #aaa; border-right-color: #fff; border-bottom-color: #fff; }
.gray { filter: grayscale(1); }
.sep { width: 7px; height: 24px; background: linear-gradient(#b0b0b0, #b0b0b0) center / 1px 100% no-repeat; }
.sep.short { width: 6px; background-position: 4px 0; }
.sep.wide { width: 5px; height: 28px; margin: 0 3px 0 2px; border-left: 1px solid #aaa; border-right: 1px solid #aaa; background: #f8f8f8; }
.sep.end { height: 29px; background-position: 0 0; }

.main { height: 595px; display: flex; }

.btn {
    display: flex;
    align-items: center;
    justify-content: center;
    background: #f0eff0;
    border: 1px solid #fff;
    border-right-color: #555;
    border-bottom-color: #555;
    box-shadow: inset -1px -1px #aaa;
    white-space: nowrap;
    overflow: hidden;
}
.field {
    display: block;
    background: #f0eff0;
    border: 1px solid #777;
    border-right-color: #ddd;
    border-bottom-color: #ddd;
    padding-left: 1px;
    height: 15px;
    line-height: 13px;
    white-space: nowrap;
    overflow: hidden;
}
.field.white { background: #fff; }
.field.flat { border-color: #ccc #eee #eee #aaa; }
.dis { color: #8d8d8d; text-shadow: 1px 1px #fff; }
.left .property, .mark-bar, .right {
    font-family: "Liberation Mono", monospace;
    font-size: 10.5px;
    letter-spacing: -.86px;
}

/* docks */
.left { width: 159px; border-right: 1px solid #8c8c8c; }
.dock-title {
    height: 14px;
    margin: 2px 5px 0 3px;
    display: flex;
    align-items: center;
    font-family: "Open Sans", sans-serif;
    font-size: 10.5px;
    letter-spacing: -.35px;
}
.dock-title span { flex: 1; padding-left: 2px; height: 13px; line-height: 11px; background: linear-gradient(90deg, #c9d3df, #e3e9f0); overflow: hidden; }
.dock-title b { width: 17px; padding-left: 3px; line-height: 12px; text-align: center; font-size: 13px; }
.obj-list {
    margin: 2px 7px 0 3px;
    height: 115px;
    border: 1px solid #777;
    border-right-color: #ccc;
    border-bottom-color: #ccc;
    background: #fff;
    display: grid;
    grid-template: 97px 15px / 130px 14px;
    overflow: hidden;
}
.obj-cols { overflow: hidden; font-size: 11px; }
.obj-head { height: 17px; display: flex; background: #f4f3f4; border-bottom: 1px solid #999; line-height: 16px; font-size: 11.5px; }
.obj-head span:first-child { width: 73px; border-right: 1px solid #999; padding-left: 7px; }
.obj-head span { padding-left: 6px; }
.obj-row { height: 16px; display: flex; align-items: center; padding-left: 4px; }
.obj-row svg { width: 14px; height: 9px; }
.obj-row b { width: 54px; padding-left: 3px; font: bold 12px "Noto Sans", sans-serif; line-height: 14px; }
.obj-row span { padding-left: 7px; }

.vscroll, .hscroll { background: #f0f0f0; display: flex; align-items: center; color: #444; }
.vscroll { flex-direction: column; padding: 3px 0 4px; }
.vscroll svg, .hscroll svg { width: 8px; height: 8px; }
.vscroll i, .hscroll i { background: #cbcbcb; }
.vscroll i { width: 100%; height: 27px; margin: 4px 0 auto; }
.hscroll i { width: 87px; height: 14px; margin: 0 auto 0 4px; }
.hscroll { padding: 0 4px; }
.splitter { height: 5px; margin: 7px 3px 0 0; border-top: 1px solid #999; border-bottom: 1px solid #aaa; background: #fbfbfb; }
.splitter + .dock-title { margin-top: 1px; }

/* object property */
.property { padding: 6px 8px 0 5px; height: 432px; overflow: hidden; }
.pos-box { height: 70px; border: 1px solid #999; box-shadow: 1px 1px #fff; display: flex; padding: 2px 3px 0 7px; }
.pos-grid { display: grid; grid-template-columns: 11px 46px 47px; grid-template-rows: 12px repeat(3, 15px); row-gap: 2.5px; column-gap: 2px; align-items: center; }
.pos-h.size { padding-left: 9px; }
.pos-buttons { display: flex; flex-direction: column; gap: 3px; margin: 16px 0 0 5px; }
.pos-buttons .btn { width: 22px; height: 21px; }
.pos-buttons svg { width: 16px; height: 16px; }
.dim { color: #666; }
.btn.apply { width: 58px; height: 21px; margin: 5px 0 0 auto; border-color: #fff #555 #555 #888; }
.font-row { display: flex; align-items: center; padding-left: 8px; margin-top: 2px; margin-right: -1px; }
.font-row .select { flex: 1; margin-left: 13px; }
.select { height: 17px; display: flex; border: 1px solid #666; border-right-color: #ccc; border-bottom-color: #ccc; padding-left: 1px; line-height: 14px; white-space: nowrap; }
.select em { flex: 1; width: 0; overflow: hidden; color: #333; }
.select i { width: 14px; border: 1px solid #fff; border-right-color: #777; border-bottom-color: #777; position: relative; }
.select i::after { content: ""; position: absolute; left: 2px; top: 4px; border: 4px solid transparent; border-top-color: #888; border-bottom: 0; }
.select.arial { margin: 3px -1px 0 7px; }
.font-buttons { display: flex; gap: 2px; margin: 2px 0 0 8px; }
.font-buttons .btn { width: 23px; height: 24px; border-left-color: #aaa; }
.font-buttons svg { width: 16px; height: 16px; }
.font-buttons .f { font: italic bold 15px "Liberation Serif", serif; color: #8a8a95; }
.font-buttons .save { margin-left: 23px; }
.radios { display: flex; align-items: center; height: 25px; padding-left: 13px; margin: 1px 0 3px; }
.radios span { width: 26px; margin: 0 2px 0 6.500px; height: 24px; display: flex; flex-direction: column; justify-content: flex-end; align-items: center; position: relative; }
.radios small { position: absolute; top: -1px; font: 9px "Open Sans", sans-serif; letter-spacing: 0; color: #999; line-height: 9px; }
.radios svg { width: 26px; height: 14px; }
.radio { width: 10px; height: 10px; border-radius: 50%; border: 1px solid #666; border-right-color: #ddd; border-bottom-color: #ddd; background: #f4f4f4; }
.radio.on { background: radial-gradient(circle, #777 2px, #f4f4f4 2.500px); }
.metric { display: flex; align-items: center; justify-content: space-between; padding-left: 7px; height: 15px; margin-bottom: 3px; line-height: 12px; }
.metric.h .dis { margin-top: -3px; }
.metric .field { width: 47px; }
.text-label { padding-left: 7px; line-height: 12px; height: 15px; }
.textarea { margin-left: 7px; height: 46px; border: 1px solid #666; border-right-color: #eee; border-bottom-color: #eee; display: grid; grid-template: 31px 13px / 1fr 16px; padding-left: 1px; line-height: 15px; color: #444; }
.textarea svg { width: 8px; height: 8px; color: #aaa; }
.ta-v { display: flex; flex-direction: column; justify-content: space-around; align-items: center; border-left: 1px solid #e0e0e0; }
.ta-h { display: flex; justify-content: space-between; align-items: center; padding: 0 4px; }
.enable { display: flex; align-items: center; margin: 7px 0 0 7px; height: 11px; }
.check { width: 11px; height: 11px; margin-right: 5px; background: #fff; border: 1px solid #666; border-right-color: #ddd; border-bottom-color: #ddd; flex: none; position: relative; }
.check.on::after { content: ""; position: absolute; left: 1px; top: 1px; width: 7px; height: 4px; border: 2px solid #222; border-top: 0; border-right: 0; transform: rotate(-48deg); }
.enable .check { background: #f0f0f0; }
.enable .check::after { border-color: #888; }
.var { display: flex; gap: 4px; margin: 6px 0 0 7px; }
.var-list { width: 96px; height: 105px; background: #fff; border: 1px solid #666; border-right-color: #eee; border-bottom-color: #eee; padding: 2px; line-height: 11px; }
.var-buttons { flex: 1; display: flex; flex-direction: column; justify-content: space-between; }
.var-buttons .btn { height: 18.500px; }
.cut-row { display: flex; gap: 15px; margin: 6px 0 0 10px; }
.cut-row i { flex: 1; height: 3px; border-top: 1px solid #fff; border-right: 2px solid #777; }

/* draw tools */
.tools { width: 32px; border-right: 1px solid #aaa; height: 429px; border-bottom: 1px solid #888; padding: 3px 2px 0; }
.grip { display: block; height: 4px; margin-bottom: 1px; border-top: 1px solid #aaa; border-bottom: 1px solid #aaa; }
.tool { height: 27.930px; display: flex; align-items: center; justify-content: center; }
.tool svg { width: 19px; height: 19px; }
.tool.pressed { background: #fafafa; border: 1px solid #999; border-right-color: #fff; border-bottom-color: #fff; }

/* work area */
.center { width: 800px; border-right: 1px solid #8c8c8c; display: flex; flex-direction: column; }
.toolbar2 { height: 31px; display: flex; align-items: center; gap: 1.500px; padding-left: 2px; border-bottom: 2px solid #777; margin-right: 5px; }
.grip-v { width: 3px; height: 24px; border-left: 1px solid #aaa; border-right: 1px solid #aaa; }
.btn2 { width: 26px; height: 26px; display: flex; align-items: center; justify-content: center; border: 1px solid #fff; border-right-color: #777; border-bottom-color: #777; }
.btn2 svg { width: 20px; height: 20px; }
.btn2.fade svg { opacity: .4; }
.g6 { margin-left: 5px; }
.g8 { margin-left: 7px; }
.g12 { margin-left: 11px; }
.canvas-row { display: flex; height: 498px; border-left: 1px solid #777; }
.canvas { width: 778px; height: 498px; }
.vscroll.big { width: 15px; padding: 5px 0 4px; }
.vscroll.big i { height: 14px; margin: 228px 0 auto; width: 14px; }
.hscroll.big { height: 16px; padding: 0 18px 1px 4px; margin-right: 5px; border-bottom: 1px solid #ddd; }
.hscroll.big i { width: 15px; margin-left: 370px; }
.rings { font-size: 12.500px; fill: #000; stroke: #000; stroke-width: .5px; word-spacing: -2px; }
.ruler-label { font-size: 8.500px; fill: #222; }

.mark-bar { flex: 1; display: flex; align-items: flex-start; padding: 6px 0 0 1px; }
.mark-bar .light { width: 51px; height: 36px; border: 1px solid #777; border-right: 2px solid #444; border-bottom: 2px solid #444; margin-top: 1px; }
.mark-bar .mark { width: 52px; height: 36px; margin: 1px 0 0 2px; }
.col { display: flex; flex-direction: column; }
.col label { display: flex; align-items: center; height: 20px; white-space: nowrap; }
.c-mode { width: 82px; margin-left: 5px; overflow: hidden; }
.c-part { width: 39px; margin-left: 4px; }
.c-part span { height: 18px; line-height: 20px; }
.c-num { width: 38px; gap: 4px; }
.btn.r { width: 17px; height: 19px; margin: 0 0 0 3px; }
.btn.param { width: 51px; height: 20px; margin: 20px 0 0 0; }
.c-time { width: 67px; gap: 6px; margin-left: 3px; }
.c-opt { margin-left: 4px; }

/* mark parameter */
.right { flex: 1; padding-left: 4px; position: relative; }
.right .dock-title { margin: 2px 1px 0 1px; }
.pens { margin: 18px 10px 0 3px; height: 116px; border: 1px solid #777; border-right-color: #ccc; border-bottom-color: #ccc; background: #fff; display: grid; grid-template: 100px 14px / 128px 14px; overflow: hidden; }
.pen-cols { overflow: hidden; }
.pen-head { display: flex; height: 15px; line-height: 14px; background: #f3f2f3; border-bottom: 1px solid #999; }
.pen-head span { border-right: 1px solid #999; padding-left: 4px; width: 34px; flex: none; }
.pen-head span:first-child { width: 70px; padding-left: 5px; }
.pen-head span:last-child { border: 0; width: 24px; padding-left: 4px; letter-spacing: -1.200px; }
.pen { display: flex; height: 11.800px; line-height: 12px; align-items: center; }
.pen svg { width: 10px; height: 10px; margin-right: 2px; }
.pen span { width: 58px; padding-left: 2px; }
.pen.sel span { background: #0a78cf; color: #fff; }
.pen i { width: 33px; height: 10px; border: 1px solid #222; }
.pen em { padding-left: 5px; }
.k0 { background: #000; }
.k1 { background: #0000ff; }
.k2 { background: #ff0000; }
.k3 { background: #00ff00; }
.k4 { background: #ff00ff; }
.k5 { background: #ffff00; }
.k6 { background: #ff8080; }
.k7 { background: #800000; }
.pens .vscroll i { height: 14px; }
.pens .hscroll i { width: 85px; margin-left: 3px; }
.pens .hscroll { padding-right: 18px; grid-column: 1 / 3; }
.swatches { display: flex; gap: 1.500px; margin: 5px 9px 0 5px; }
.swatches i { width: 16.100px; height: 16px; }
.param-box { margin: 2px 10px 0 2px; height: 257px; border: 1px solid #999; box-shadow: 1px 1px #fff; padding: 5px 2px 0; }
.use-def { display: flex; align-items: center; height: 13px; padding-left: 2px; }
.prow { display: flex; gap: 3px; height: 15px; margin-top: 3.850px; line-height: 14px; }
.use-def + .prow { margin-top: 1px; }
.prow.tc { margin-top: 22.500px; }
.prow span { width: 82px; border-top: 1px solid #aaa; border-left: 1px solid #999; white-space: nowrap; line-height: 13px; }
.prow b { flex: 1; font-weight: normal; background: #fff; border: 1px solid #555; border-right-color: #ddd; border-bottom-color: #ddd; padding-left: 1px; display: flex; justify-content: space-between; line-height: 13px; }
.prow b.ro { background: #f0eff0; }
.prow b i { width: 14px; border-right: 1px solid #777; background: linear-gradient(#eee 5px, #777 5px 6px, #eee 6px 12px, #777 12px); }
.adv { display: flex; justify-content: flex-end; gap: 4px; margin-top: 28px; }
.adv .btn { height: 19px; width: 65px; }
.adv .btn.wave { width: 28px; }
.wave svg { width: 26px; height: 12px; }
.pname { display: flex; gap: 1px; margin: 4px 9px 0 1px; }
.pname .btn { width: 56px; height: 16px; }
.pname .field { flex: 1; padding: 0; }
.wide-btn { height: 21px; margin: 1px 9px 0 1px; }

/* status bar */
.status { height: 19px; border-top: 1px solid #8c8c8c; background: #f2f2f2; display: flex; gap: 3px; padding-left: 2px; font-size: 11.5px; letter-spacing: -.25px; line-height: 19px; overflow: hidden; }
.msg { flex: 1; }
.cell { border: 1px solid #aaa; border-right-color: #fff; margin-top: 2px; line-height: 15px; padding-left: 1px; white-space: nowrap; overflow: hidden; }
.c1 { width: 94px; padding-left: 4px; }
.c2 { width: 49px; letter-spacing: -.5px; }
.c3 { width: 50px; letter-spacing: -.4px; }

/* windows taskbar */
.taskbar { height: 36px; display: flex; background: linear-gradient(90deg, #21363f, #22343f 60%, #1d2a4c); color: #fff; }
.start { width: 43px; display: flex; align-items: center; justify-content: center; }
.start svg { width: 15px; height: 15px; }
.search { width: 259px; background: #f5f6f5; color: #222; display: flex; align-items: center; padding: 0 14px 0 11px; font-size: 12.500px; }
.s-ic { width: 15px; height: 15px; margin-right: 10px; }
.s-art { width: 44px; height: 30px; margin-left: auto; }
.apps { display: flex; }
.apps span { width: 44.300px; display: flex; align-items: center; justify-content: center; border-bottom: 2px solid transparent; }
.apps svg { width: 22px; height: 22px; }
.apps .open { border-bottom-color: #76b9ed; }
.apps .open.active { background: #4a5a62; }
.apps .active svg { height: 26px; }
.tray { margin-left: auto; display: flex; align-items: center; gap: 6px; padding-right: 22px; }
.tray svg { width: 15px; height: 15px; }
.tray .t-up { width: 12px; height: 12px; }
.two { display: flex; flex-direction: column; align-items: center; font-size: 11px; line-height: 15px; letter-spacing: -.2px; padding-bottom: 2px; }
.temp { margin-right: 4px; }
.clock span:last-child { letter-spacing: 0; }
.ying { font-size: 15px; }
.pin { font-size: 12px; line-height: 13px; width: 14px; height: 14px; text-align: center; background: #fff; color: #1e2b45; margin-left: 5px; }
.clock { margin-left: 8px; width: 56px; }
.tray .note { margin-left: 9px; }

/* overlays */
.logo { position: absolute; left: 832px; top: 18px; width: 290px; height: 56px; overflow: visible; }
.cn { font: bold 31px "Noto Sans CJK SC", sans-serif; stroke: #dc0a12; stroke-width: .5px; }
.en { font: italic bold 21px "Liberation Sans", sans-serif; }
.timer {
    position: absolute;
    left: 778px;
    top: 631px;
    width: 43px;
    height: 43px;
    border-radius: 50%;
    border: 2px solid #d9f0fc;
    background: linear-gradient(160deg, #3c8df5, #4a9cf6 70%, #7cc8fb);
    color: #e8f6ff;
    font-size: 12.500px;
    line-height: 39px;
    text-align: center;
    box-shadow: 0 1px 5px #bbb;
}
```
FILE: rulers.js
```javascript
const NS = 'http://www.w3.org/2000/svg';
const ORIGIN_X = 653.3, ORIGIN_Y = 358.4, STEP = 3.695;

function add(parent, tag, attrs, text) {
    const el = document.createElementNS(NS, tag);
    for (const k in attrs) el.setAttribute(k, attrs[k]);
    if (text !== undefined) el.textContent = text;
    parent.appendChild(el);
}

function tickLength(n) {
    if (n % 10 === 0) return 9;
    return n % 5 === 0 ? 7 : 5;
}

function drawRulers() {
    const g = document.getElementById('rulers');
    let d = 'M273 119.5H1034M273.5 119V600';
    for (let n = -102; n <= 103; n++) {
        const x = Math.floor(ORIGIN_X + n * STEP) + 0.5;
        d += `M${x} 119v-${tickLength(n)}`;
        if (n % 10 === 0) {
            add(g, 'text', {x: n < 0 ? x + 1.5 : x, y: 109, 'text-anchor': 'middle', class: 'ruler-label'}, n);
        }
    }
    for (let n = -64; n <= 64; n++) {
        const y = Math.floor(ORIGIN_Y - n * STEP) + 0.5;
        d += `M273 ${y}h-${tickLength(n)}`;
        if (n % 10 === 0) {
            add(g, 'text', {transform: `translate(263 ${y}) rotate(-90)`, 'text-anchor': 'middle', class: 'ruler-label'}, n);
        }
    }
    add(g, 'path', {d: d, stroke: '#111', fill: 'none'});
}

function drawRings() {
    const g = document.getElementById('rings');
    for (let i = 1; i <= 10; i++) {
        const label = 'Ring Bird' + String(i).padStart(4, '0');
        add(g, 'text', {transform: `translate(${447.5 + i * 38.05} 399) rotate(-90)`, textLength: 78}, label);
    }
}

drawRulers();
drawRings();
```
